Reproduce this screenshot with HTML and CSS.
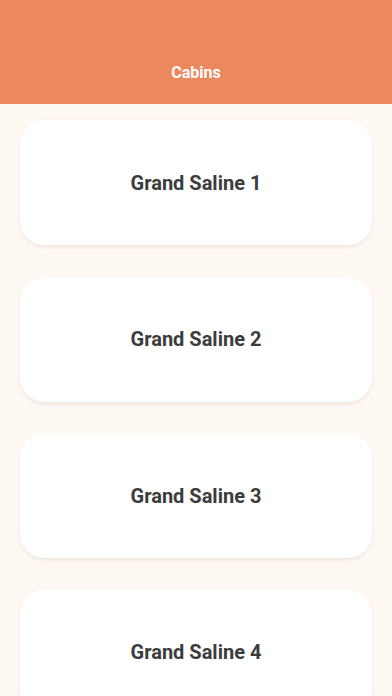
FILE: index.html
```html
<!DOCTYPE html>
<html>
<head>
<meta charset="utf-8">
<link rel="stylesheet" href="styles.css">
</head>
<body>
<header class="appbar"><span class="appbar-title">Cabins</span></header>
<main class="list">
  <div class="card"><span class="card-title">Grand Saline 1</span></div>
  <div class="card"><span class="card-title">Grand Saline 2</span></div>
  <div class="card"><span class="card-title">Grand Saline 3</span></div>
  <div class="card"><span class="card-title">Grand Saline 4</span></div>
</main>
</body>
</html>
```
FILE: styles.css
```css
html, body {
  margin: 0;
  padding: 0;
  height: 100%;
  overflow: hidden;
}
body {
  background: #fff8f3;
  font-family: Roboto, "Liberation Sans", sans-serif;
}
.appbar {
  height: 104px;
  background: #ec885e;
  display: flex;
  align-items: flex-end;
  justify-content: center;
  box-sizing: border-box;
  padding-bottom: 22px;
}
.appbar-title {
  color: #ffffff;
  font-size: 16px;
  font-weight: 700;
  line-height: 18px;
}
.list {
  display: flex;
  flex-direction: column;
  gap: 31.5px;
  padding: 16px 20px 0 20px;
}
.card {
  height: 125px;
  flex-shrink: 0;
  background: #ffffff;
  border-radius: 24px;
  box-shadow: 0 2px 4px rgba(0, 0, 0, 0.08);
  display: flex;
  align-items: center;
  justify-content: center;
}
.card-title {
  color: #3c3c3c;
  font-size: 20px;
  font-weight: 700;
}
```
